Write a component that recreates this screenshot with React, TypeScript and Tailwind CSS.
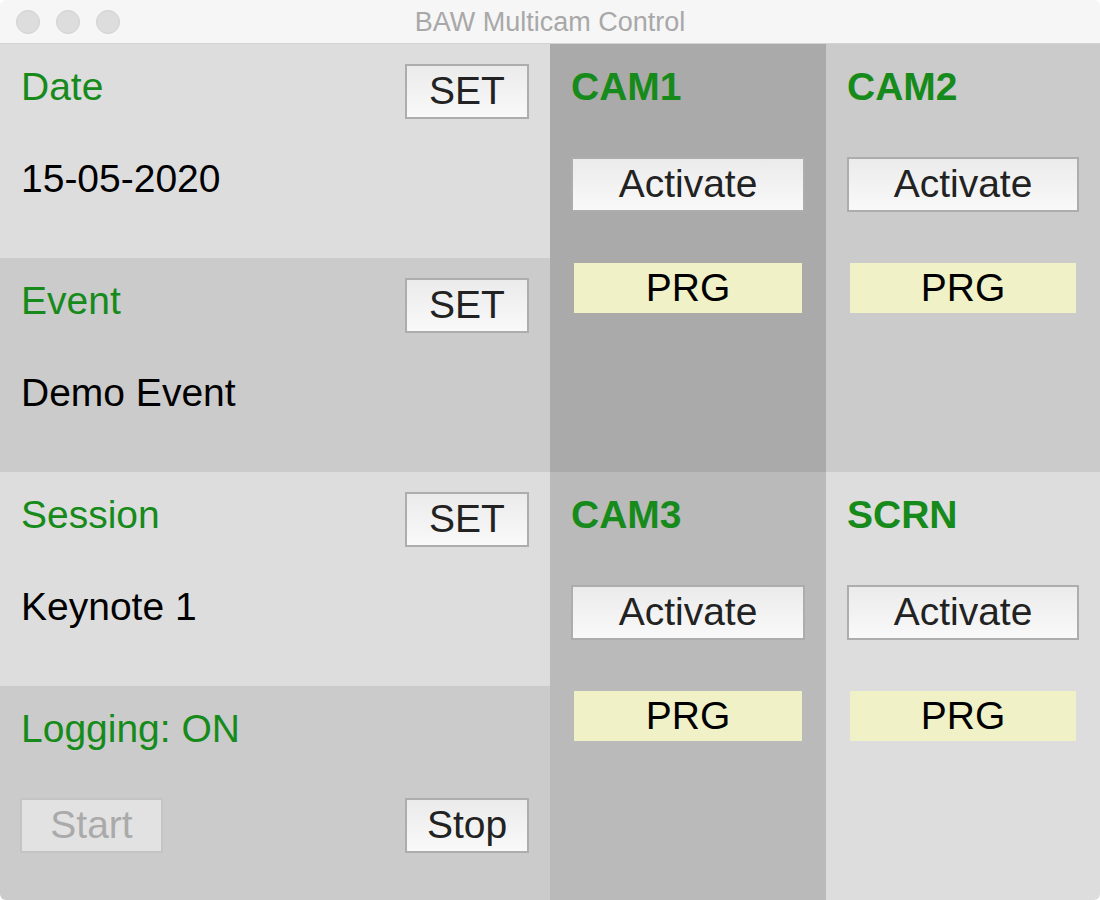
import React from "react";

const font = { fontFamily: '"Liberation Sans", Arial, sans-serif' };

function Btn({ label, className = "", disabled = false }: { label: string; className?: string; disabled?: boolean }) {
  return (
    <div
      className={
        "flex items-center justify-center h-[55px] border-2 text-[39px] leading-none " +
        (disabled
          ? "border-[#c4c4c4] bg-[#e2e2e2] text-[#aaaaaa] "
          : "border-[#adadad] bg-gradient-to-b from-[#ebebeb] to-[#f9f9f9] text-[#222222] ") +
        className
      }
    >
      <span className="-mt-[2px]">{label}</span>
    </div>
  );
}

function Section({ label, value, bg }: { label: string; value: string; bg: string }) {
  return (
    <div className={"h-[214px] flex flex-col pt-[20px] pl-[21px] pr-[21px] " + bg}>
      <div className="flex justify-between items-start">
        <div className="mt-[3px] text-[39px] leading-none text-[#168a1a]">{label}</div>
        <Btn label="SET" className="w-[124px]" />
      </div>
      <div className="mt-[40px] text-[39px] leading-none text-black">{value}</div>
    </div>
  );
}

function Cam({ name, bg, w }: { name: string; bg: string; w: string }) {
  return (
    <div className={"h-[428px] flex flex-col pt-[23px] px-[21px] " + bg}>
      <div className="text-[39px] leading-none font-bold text-[#168a1a]">{name}</div>
      <div className="mt-[51px]">
        <Btn label="Activate" className={"h-[54px] " + w} />
      </div>
      <div className="mt-[51px] mx-[3px] h-[50px] bg-[#f1f1c8] flex items-center justify-center text-[39px] leading-none text-black">
        <span className="-mt-[2px]">PRG</span>
      </div>
    </div>
  );
}

export default function App() {
  return (
    <div className="w-[1100px] h-[900px] bg-white" style={font}>
      <div className="w-[1100px] h-[900px] rounded-[6px] overflow-hidden flex flex-col">
        <div className="relative h-[44px] bg-[#f6f6f6] border-b border-[#d3d3d3] flex items-center justify-center">
          <div className="absolute left-[16px] top-[10px] flex gap-[16px]">
            <div className="w-[24px] h-[24px] rounded-full bg-[#dddddd] border border-[#d0d0d0]" />
            <div className="w-[24px] h-[24px] rounded-full bg-[#dddddd] border border-[#d0d0d0]" />
            <div className="w-[24px] h-[24px] rounded-full bg-[#dddddd] border border-[#d0d0d0]" />
          </div>
          <div className="text-[27px] leading-none text-[#a8a8a8] mt-[1px]">BAW Multicam Control</div>
        </div>
        <div className="flex">
          <div className="w-[550px] flex flex-col">
            <Section label="Date" value="15-05-2020" bg="bg-[#dddddd]" />
            <Section label="Event" value="Demo Event" bg="bg-[#cbcbcb]" />
            <Section label="Session" value="Keynote 1" bg="bg-[#dddddd]" />
            <div className="h-[214px] flex flex-col pt-[23px] pl-[21px] pr-[21px] bg-[#cbcbcb]">
              <div className="text-[39px] leading-none text-[#168a1a]">Logging: ON</div>
              <div className="mt-[50px] flex justify-between">
                <Btn label="Start" disabled className="w-[143px] -ml-[1px]" />
                <Btn label="Stop" className="w-[124px]" />
              </div>
            </div>
          </div>
          <div className="w-[276px] flex flex-col">
            <Cam name="CAM1" bg="bg-[#aaaaaa]" w="w-[234px]" />
            <Cam name="CAM3" bg="bg-[#bababa]" w="w-[234px]" />
          </div>
          <div className="w-[274px] flex flex-col">
            <Cam name="CAM2" bg="bg-[#cbcbcb]" w="w-[232px]" />
            <Cam name="SCRN" bg="bg-[#dddddd]" w="w-[232px]" />
          </div>
        </div>
      </div>
    </div>
  );
}
